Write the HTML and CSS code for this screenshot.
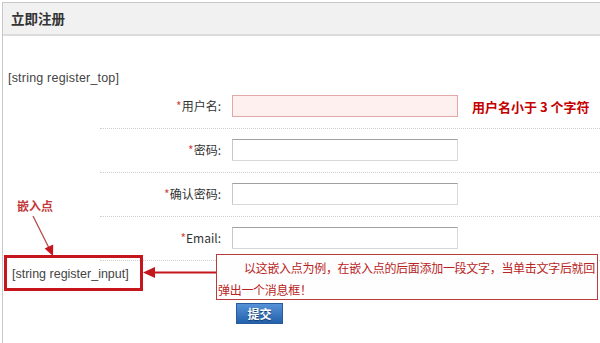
FILE: index.html
```html
<!DOCTYPE html>
<html lang="zh-CN">
<head>
<meta charset="utf-8">
<title>立即注册</title>
<link rel="stylesheet" href="styles.css">
</head>
<body>
<div class="panel">
  <div class="panel-head">立即注册</div>
  <div class="panel-body">
    <div class="hook hook-top">[string register_top]</div>
    <div class="form">
      <div class="row">
        <label class="lbl"><span class="req">*</span>用户名:</label>
        <input class="field field-error" type="text">
        <span class="err">用户名小于 3 个字符</span>
      </div>
      <div class="row">
        <label class="lbl"><span class="req">*</span>密码:</label>
        <input class="field" type="password">
      </div>
      <div class="row">
        <label class="lbl"><span class="req">*</span>确认密码:</label>
        <input class="field" type="password">
      </div>
      <div class="row">
        <label class="lbl"><span class="req">*</span>Email:</label>
        <input class="field" type="text">
      </div>
    </div>
    <div class="hook hook-input">[string register_input]</div>
    <div class="actions"><button class="btn" type="button">提交</button></div>
  </div>
</div>

<div class="note-label">嵌入点</div>
<div class="mark-box"></div>
<div class="note-box">以这嵌入点为例，在嵌入点的后面添加一段文字，当单击文字后就回<br>弹出一个消息框！</div>
<svg class="arrows" width="600" height="343" viewBox="0 0 600 343">
  <line x1="33" y1="216" x2="49" y2="248" stroke="#b44848" stroke-width="1.3"/>
  <polygon points="53,256 44.6,248.6 53.2,244.4" fill="#c4161c"/>
  <line x1="216" y1="272.5" x2="152" y2="272.5" stroke="#c4161c" stroke-width="2"/>
  <polygon points="143,272.5 155,267 155,278" fill="#c4161c"/>
</svg>
</body>
</html>
```
FILE: styles.css
```css
html, body {
  margin: 0;
  padding: 0;
  background: #fff;
}
body {
  position: relative;
  width: 600px;
  height: 343px;
  overflow: hidden;
  font-family: "Liberation Sans", "Noto Sans CJK SC", sans-serif;
  font-size: 12px;
  color: #444;
}
.panel {
  margin: 2px 0 0 2px;
  border-left: 1px solid #c8c8c8;
  border-top: 1px solid #c8c8c8;
  height: 341px;
  box-sizing: border-box;
}
.panel-head {
  height: 31px;
  line-height: 30px;
  background: #f1f1f1;
  border-bottom: 2px solid #dcdcdc;
  padding-left: 8px;
  font-family: "Noto Sans CJK SC", sans-serif;
  font-size: 13.5px;
  font-weight: bold;
  color: #333;
}
.panel-body {
  padding-left: 5px;
}
.hook {
  font-size: 12.5px;
  color: #444;
  line-height: 14px;
}
.hook-top {
  padding-top: 35px;
  letter-spacing: 0.2px;
}
.form {
  margin-left: 92px;
}
.row {
  display: flex;
  align-items: center;
  padding: 10px 0 11px;
  border-bottom: 1px dotted #cfcfcf;
}
.lbl {
  width: 121px;
  text-align: right;
  margin-right: 11px;
  font-family: "Noto Sans CJK SC", sans-serif;
  font-size: 12px;
  color: #333;
  line-height: 16px;
}
.req {
  color: #d04848;
}
.field {
  width: 226px;
  height: 22px;
  box-sizing: border-box;
  margin: 0;
  padding: 0 3px;
  border: 1px solid #d8d8d8;
  border-top-color: #a0a0a0;
  border-left-color: #c8c8c8;
  background: #fff;
}
.field-error {
  background: #fff0f0;
  border-color: #e2a8a8;
}
.err {
  margin-left: 14px;
  font-family: "Noto Sans CJK SC", sans-serif;
  font-size: 13px;
  font-weight: bold;
  color: #c40000;
}
.hook-input {
  padding-top: 5px;
  padding-left: 4px;
  line-height: 16px;
}
.actions {
  margin-top: 21px;
  padding-left: 228px;
}
.btn {
  width: 47px;
  height: 21px;
  padding: 0;
  margin: 0;
  border: 1px solid #2a5a98;
  background: linear-gradient(#5592d6, #2461ad);
  color: #fff;
  font-family: "Noto Sans CJK SC", sans-serif;
  font-size: 12px;
  font-weight: bold;
  line-height: 19px;
  text-shadow: 0 1px 1px #123a6b;
}
.note-label {
  position: absolute;
  left: 17px;
  top: 198px;
  font-family: "Noto Sans CJK SC", sans-serif;
  font-size: 12px;
  font-weight: bold;
  line-height: 16px;
  color: #c23a3c;
}
.mark-box {
  position: absolute;
  left: 4px;
  top: 255px;
  width: 139px;
  height: 36px;
  box-sizing: border-box;
  border: 3px solid #c4161c;
}
.note-box {
  position: absolute;
  left: 216px;
  top: 254px;
  width: 382px;
  height: 46px;
  box-sizing: border-box;
  border: 1px solid #b83c3c;
  background: #fffefe;
  padding: 2px 0 0 1px;
  text-indent: 26px;
  white-space: nowrap;
  font-family: "Noto Sans CJK SC", sans-serif;
  font-size: 12px;
  letter-spacing: -0.3px;
  line-height: 22px;
  color: #b82424;
}
.arrows {
  position: absolute;
  left: 0;
  top: 0;
  pointer-events: none;
}
```
